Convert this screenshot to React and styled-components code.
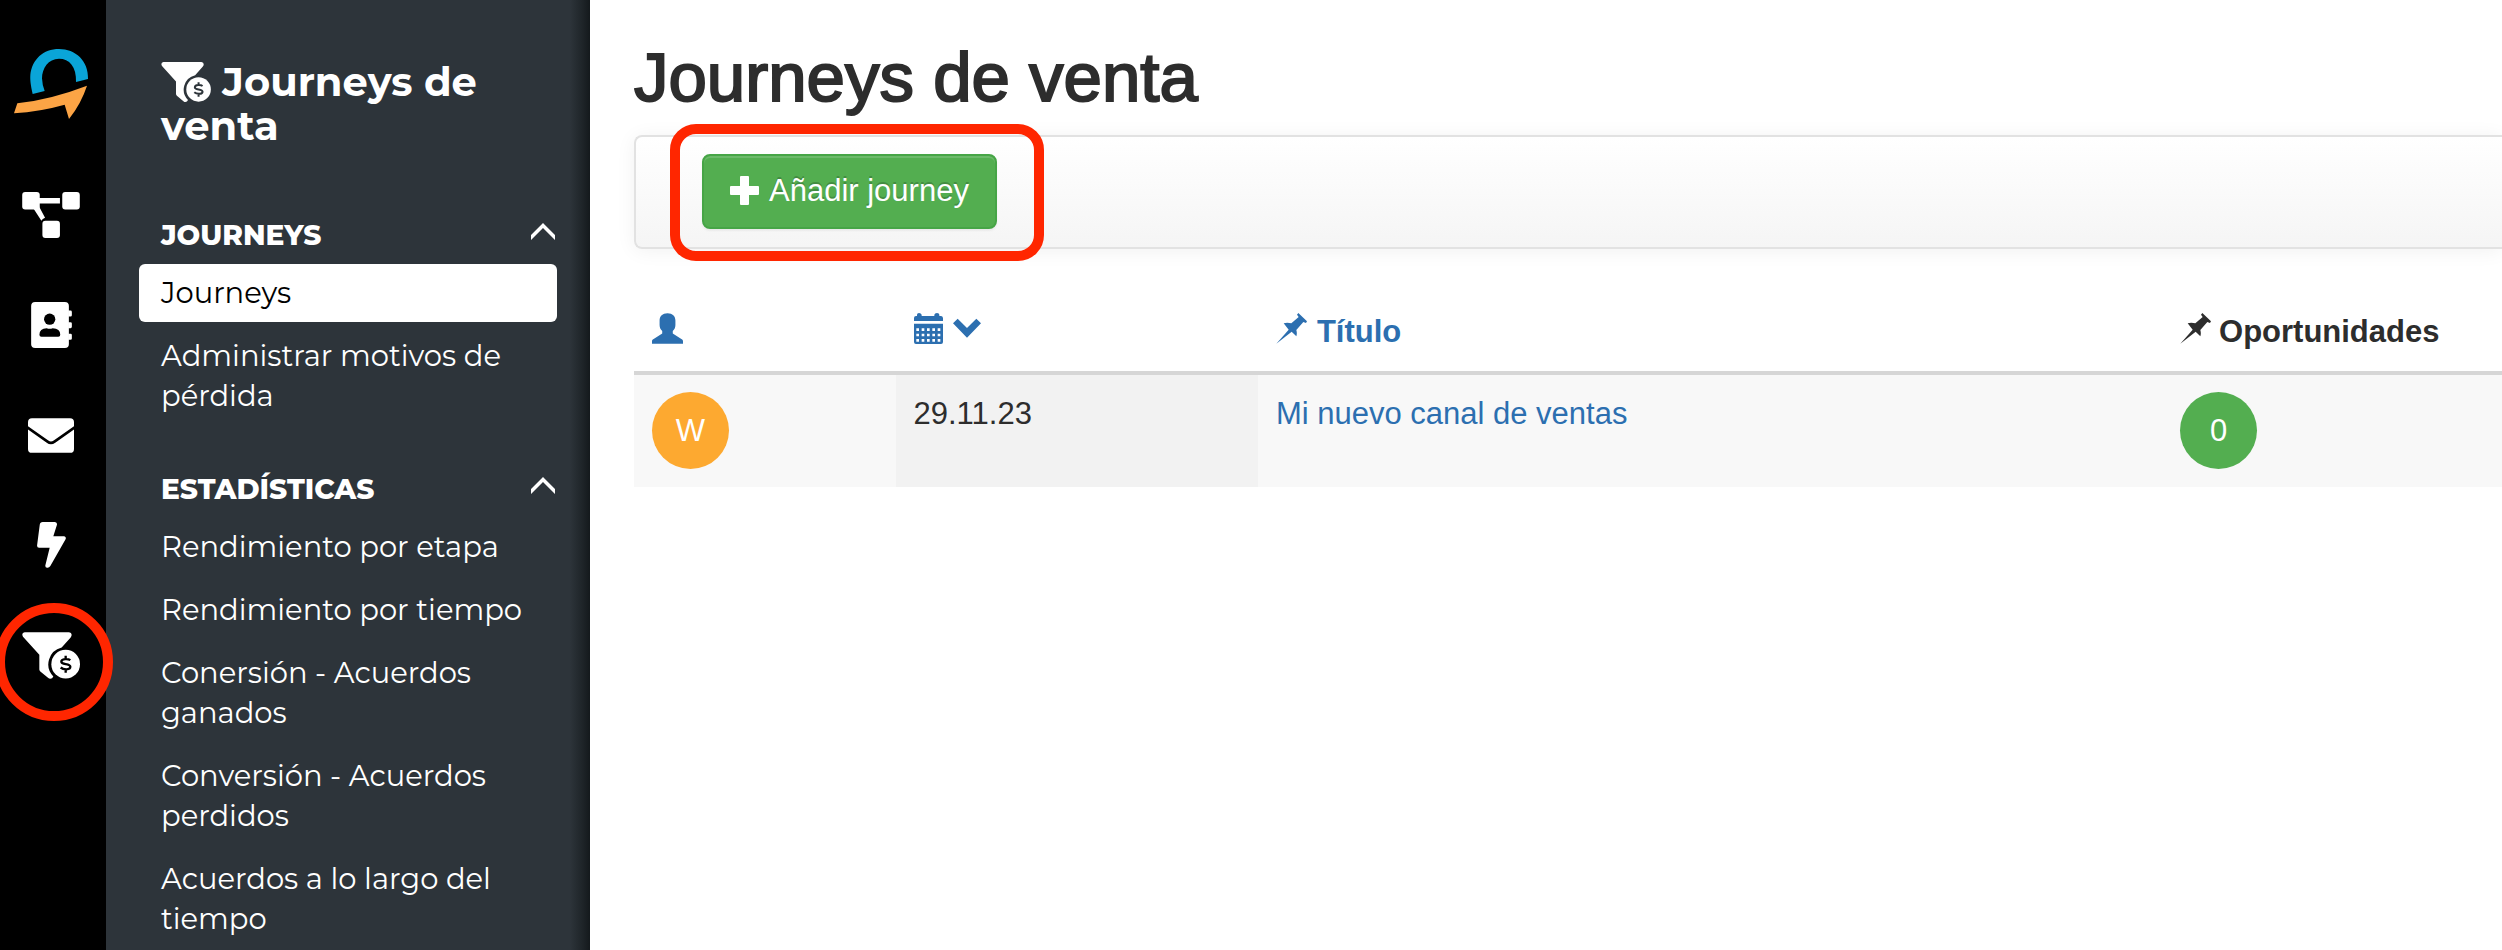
import React from "react";
import styled, { createGlobalStyle } from "styled-components";

const sections = [
  {
    title: "JOURNEYS",
    items: [
      { text: "Journeys", active: true },
      { text: "Administrar motivos de pérdida" },
    ],
  },
  {
    title: "ESTADÍSTICAS",
    items: [
      { text: "Rendimiento por etapa" },
      { text: "Rendimiento por tiempo" },
      { text: "Conersión - Acuerdos ganados" },
      { text: "Conversión - Acuerdos perdidos" },
      { text: "Acuerdos a lo largo del tiempo" },
    ],
  },
];

const journeys = [
  { id: 1, owner: "W", date: "29.11.23", title: "Mi nuevo canal de ventas", deals: 0 },
];

const Logo = () => (
  <svg width="90" height="90" viewBox="-6 0 270 270" aria-hidden="true">
    <path
      d="M68 162C62 135 60 120 61 105C66 58 100 27 147 27C196 27 236 62 234 117L198 126C200 80 178 56 147 56C115 56 96 85 96 115Q97 138 104 153Z"
      fill="#0aa5d8"
    />
    <path d="M22 190Q125 178 231 137Q214 190 177 237L164 194Q90 215 12 220Z" fill="#fca445" />
  </svg>
);

const DiagramIcon = () => (
  <svg width="58" height="46" viewBox="0 0 174 139" fill="currentColor" aria-hidden="true">
    <rect width="53" height="53" rx="9" />
    <rect x="121" width="53" height="53" rx="9" />
    <rect x="61" y="87" width="53" height="52" rx="9" />
    <path d="M50 18h64v17H50zM34 50l17-6 18 34q-8 3-11 9z" />
  </svg>
);

const AddressBookIcon = () => (
  <svg width="41" height="46" viewBox="0 0 123 139" fill="currentColor" aria-hidden="true">
    <rect width="114" height="139" rx="12" />
    <path d="M112 26h7q4 0 4 4v10q0 4-4 4h-7zM112 61h7q4 0 4 4v10q0 4-4 4h-7zM112 96h7q4 0 4 4v10q0 4-4 4h-7z" />
    <circle cx="56" cy="52" r="17" fill="#000" />
    <path d="M25 99q0-20 22-20q9 4 18 0q23 0 23 20q0 6-6 6H31q-6 0-6-6z" fill="#000" />
  </svg>
);

const EnvelopeIcon = () => (
  <svg width="46" height="35" viewBox="0 0 139 105" aria-hidden="true">
    <rect width="139" height="105" rx="12" fill="currentColor" />
    <path d="M-3 27L59 71Q69 79 80 71L142 27" fill="none" stroke="#000" strokeWidth="8" />
  </svg>
);

const BoltIcon = () => (
  <svg width="29" height="46" viewBox="0 0 87 139" fill="currentColor" aria-hidden="true">
    <path d="M17 0H54q7 1 6 8L49 43h33q7 2 4 9L40 133q-4 6-10 5q-6-1-5-7L38 78H6q-7-1-6-8L8 8q1-8 9-8z" />
  </svg>
);

const FunnelIcon = ({ width, height, cut }) => (
  <svg width={width} height={height} viewBox="0 0 174 140" fill="currentColor" aria-hidden="true">
    <path d="M8 0H141q8 1 8 8q0 4-3 8L119 46A52 52 0 0 0 94 133q-3 7-9 7q-4 0-7-3L55 118q-3-3-3-6V68L3 14Q-3 2 8 0z" />
    <circle cx="131" cy="96" r="43" />
    <path
      d="M145 84C138 79 118 79 118 89C118 99 145 93 145 104C145 114 124 113 116 106M131 71v10M131 112v10"
      fill="none"
      stroke={cut}
      strokeWidth="7"
    />
  </svg>
);

const UserIcon = () => (
  <svg width="31" height="31" viewBox="0 0 94 93" fill="currentColor" aria-hidden="true">
    <path d="M47 0c15 0 24 9 24 22v14c0 8-3 14-8 18v8l26 16c4 2 5 4 5 8v7H0v-7c0-4 1-6 5-8l26-16v-8c-5-4-8-10-8-18V22C23 9 32 0 47 0z" />
  </svg>
);

const CalendarIcon = () => (
  <svg width="29" height="31" viewBox="0 0 87 93" aria-hidden="true">
    <path
      d="M0 24V15q0-6 6-6h3V5q0-5 6-5t8 5v4h38V5q1-5 8-5t7 5v4h5q5 0 6 6v9zM0 32h87v55q0 6-6 6H6q-6 0-6-6z"
      fill="currentColor"
    />
    <path
      d="M7 50h74M7 66h74M7 82h74"
      stroke="#fff"
      strokeWidth="8"
      strokeDasharray="8 8"
    />
  </svg>
);

const ChevronDownIcon = () => (
  <svg width="28" height="31" viewBox="0 0 84 93" fill="currentColor" aria-hidden="true">
    <path d="M14 17l28 28 28-28 14 14-42 43L0 31z" />
  </svg>
);

const PinIcon = () => (
  <svg width="31" height="31" viewBox="0 0 93 93" fill="currentColor" aria-hidden="true">
    <path d="M1 92l37-42-15-19c8-3 16-2 23 0l22-19-5-7 4-5 26 25-3 5-8-3-21 24c2 7 2 13 0 19L47 56z" />
  </svg>
);

const PlusIcon = () => (
  <svg width="29" height="29" viewBox="0 0 29 29" fill="currentColor" aria-hidden="true">
    <path d="M11 0h7q1 0 1 1v9h9q1 0 1 1v7q0 1-1 1h-9v9q0 1-1 1h-7q-1 0-1-1v-9H1q-1 0-1-1v-7q0-1 1-1h9V1q0-1 1-1z" />
  </svg>
);

const ChevronUpIcon = () => (
  <svg width="24" height="17" viewBox="0 0 24 17" fill="currentColor" aria-hidden="true">
    <path d="M12 0l12 12v5L12 5 0 17v-5z" />
  </svg>
);

const navLinks = [
  { id: "campaigns", label: "Campañas", icon: <DiagramIcon /> },
  { id: "contacts", label: "Contactos", icon: <AddressBookIcon /> },
  { id: "mail", label: "Correo", icon: <EnvelopeIcon /> },
  { id: "automation", label: "Automatización", icon: <BoltIcon /> },
  {
    id: "sales",
    label: "Ventas",
    icon: <FunnelIcon width={58} height={47} cut="#000" />,
    marked: true,
  },
];

export const IconRail = () => (
  <Rail>
    <LogoLink href="#inicio" aria-label="Inicio">
      <Logo />
    </LogoLink>
    {navLinks.map((link) => (
      <RailLink key={link.id} href={`#${link.id}`} aria-label={link.label}>
        {link.icon}
        {link.marked && <RoundMark />}
      </RailLink>
    ))}
  </Rail>
);

export const Sidebar = () => (
  <Side>
    <SideTitle>
      <FunnelIcon width={50} height={40} cut="#2d343a" /> Journeys de venta
    </SideTitle>
    {sections.map((section) => (
      <Section key={section.title}>
        <SectionToggle type="button" aria-expanded="true">
          {section.title}
          <ChevronUpIcon />
        </SectionToggle>
        <SideList>
          {section.items.map((item) => (
            <li key={item.text}>
              <SideLink href="#" $active={item.active}>
                {item.text}
              </SideLink>
            </li>
          ))}
        </SideList>
      </Section>
    ))}
  </Side>
);

export const JourneyTable = () => (
  <Table>
    <colgroup>
      <Col $width="14%" />
      <Col $width="19.4%" />
      <Col $width="48.4%" />
      <Col />
    </colgroup>
    <thead>
      <tr>
        <Th>
          <SortLink href="#" aria-label="Propietario">
            <UserIcon />
          </SortLink>
        </Th>
        <Th>
          <SortLink href="#" aria-label="Fecha">
            <CalendarIcon />
            <ChevronDownIcon />
          </SortLink>
        </Th>
        <Th>
          <SortLink href="#">
            <PinIcon />
            Título
          </SortLink>
        </Th>
        <Th>
          <HeadLabel>
            <PinIcon />
            Oportunidades
          </HeadLabel>
        </Th>
      </tr>
    </thead>
    <tbody>
      {journeys.map((journey) => (
        <tr key={journey.id}>
          <Td>
            <Badge $color="#fda930">{journey.owner}</Badge>
          </Td>
          <Td $sorted>{journey.date}</Td>
          <Td>
            <TitleLink href="#">{journey.title}</TitleLink>
          </Td>
          <Td>
            <Badge $color="#53ae50">{journey.deals}</Badge>
          </Td>
        </tr>
      ))}
    </tbody>
  </Table>
);

export default function App() {
  return (
    <>
      <GlobalStyle />
      <Page>
        <IconRail />
        <Sidebar />
        <Main>
          <Heading>Journeys de venta</Heading>
          <Toolbar>
            <Highlight>
              <AddButton type="button">
                <PlusIcon />
                Añadir journey
              </AddButton>
            </Highlight>
          </Toolbar>
          <JourneyTable />
        </Main>
      </Page>
    </>
  );
}

const GlobalStyle = createGlobalStyle`
  * {
    box-sizing: border-box;
  }

  body {
    margin: 0;
    background-color: #fff;
    color: #2d2d2d;
    font-family: "Helvetica Neue", "Liberation Sans", Arial, sans-serif;
    font-size: 31px;
    line-height: 44px;
  }

  a {
    text-decoration: none;
  }
`;

const Page = styled.div`
  display: flex;
  height: 100vh;
  overflow: hidden;
`;

const Rail = styled.nav`
  flex: 0 0 106px;
  display: flex;
  flex-direction: column;
  background-color: #000;
`;

const LogoLink = styled.a`
  display: flex;
  justify-content: center;
  padding: 40px 0 30px;
`;

const RailLink = styled.a`
  position: relative;
  flex: 0 0 110px;
  display: flex;
  align-items: center;
  justify-content: center;
  padding-right: 4px;
  color: #fff;
`;

const RoundMark = styled.span`
  position: absolute;
  top: 3px;
  left: -5px;
  width: 118px;
  height: 118px;
  border: 10px solid #ff2600;
  border-radius: 50%;
  z-index: 1;
`;

const Side = styled.aside`
  flex: 0 0 484px;
  padding: 60px 33px 0;
  background-color: #2d343a;
  background-image: linear-gradient(to left, #14191c, #1f2529 8px, #2d343a 20px);
  color: #fff;
  font-family: Montserrat, Inter, sans-serif;
`;

const SideTitle = styled.h2`
  margin: 0 0 67px;
  padding: 0 22px;
  font-size: 40px;
  font-weight: 700;
  line-height: 44px;

  svg {
    vertical-align: -6px;
  }
`;

const Section = styled.section`
  margin-bottom: 44px;
`;

const SectionToggle = styled.button`
  display: flex;
  align-items: center;
  justify-content: space-between;
  width: 100%;
  padding: 0 2px 0 22px;
  margin-bottom: 9px;
  border: none;
  background: none;
  color: inherit;
  font: inherit;
  font-size: 28px;
  font-weight: 800;
  line-height: 40px;
  cursor: pointer;

  svg {
    margin-bottom: 8px;
  }
`;

const SideList = styled.ul`
  list-style: none;
  margin: 0;
  padding: 0;
  display: flex;
  flex-direction: column;
  gap: 5px;
`;

const SideLink = styled.a`
  display: block;
  padding: 9px 22px;
  border-radius: 6px;
  background-color: ${(props) => (props.$active ? "#fff" : "transparent")};
  color: ${(props) => (props.$active ? "#000" : "#fff")};
  font-size: 29px;
  line-height: 40px;
`;

const Main = styled.main`
  flex: 1;
  min-width: 0;
  padding: 42px 0 0 44px;
`;

const Heading = styled.h1`
  margin: 0 0 21px;
  font-size: 69px;
  font-weight: 400;
  line-height: 72px;
  -webkit-text-stroke: 2px currentColor;
`;

const Toolbar = styled.div`
  display: flex;
  align-items: center;
  height: 114px;
  margin-bottom: 44px;
  padding-left: 34px;
  border: 2px solid #e2e2e2;
  border-right: none;
  border-radius: 8px 0 0 8px;
  background-image: linear-gradient(#fff, #f5f5f5);
  box-shadow: 0 2px 20px rgba(0, 0, 0, 0.06);
`;

const Highlight = styled.div`
  flex: none;
  margin: -14px 0;
  padding: 20px 37px 22px 22px;
  border: 10px solid #ff2600;
  border-radius: 26px;
`;

const AddButton = styled.button`
  display: flex;
  align-items: center;
  gap: 10px;
  padding: 13px 26px 14px;
  border: 2px solid #46a546;
  border-radius: 8px;
  background-color: #53ae50;
  box-shadow: inset 0 2px 0 rgba(255, 255, 255, 0.15), 0 2px 2px rgba(0, 0, 0, 0.05);
  color: #fff;
  font: inherit;
  text-shadow: 0 -2px 0 rgba(0, 0, 0, 0.2);
  cursor: pointer;
`;

const Table = styled.table`
  width: 100%;
  table-layout: fixed;
  border-collapse: collapse;
`;

const Col = styled.col`
  width: ${(props) => props.$width || "auto"};
`;

const Th = styled.th`
  padding: 17px 18px;
  border-bottom: 4px solid #d6d6d6;
  text-align: left;
`;

const HeadLabel = styled.span`
  display: flex;
  align-items: center;
  gap: 8px;
  height: 44px;

  svg {
    flex: none;
    margin-bottom: 8px;
  }
`;

const SortLink = styled.a`
  display: flex;
  align-items: center;
  gap: 10px;
  height: 44px;
  color: #2c6fb0;

  svg {
    flex: none;
    margin-bottom: 8px;
  }
`;

const Td = styled.td`
  padding: 17px 18px 18px;
  background-color: ${(props) => (props.$sorted ? "#f2f2f2" : "#f8f8f8")};
  vertical-align: top;
`;

const TitleLink = styled.a`
  color: #2c6fb0;
`;

const Badge = styled.span`
  display: flex;
  align-items: center;
  justify-content: center;
  width: 77px;
  height: 77px;
  border-radius: 50%;
  background-color: ${(props) => props.$color};
  color: #fff;
`;
